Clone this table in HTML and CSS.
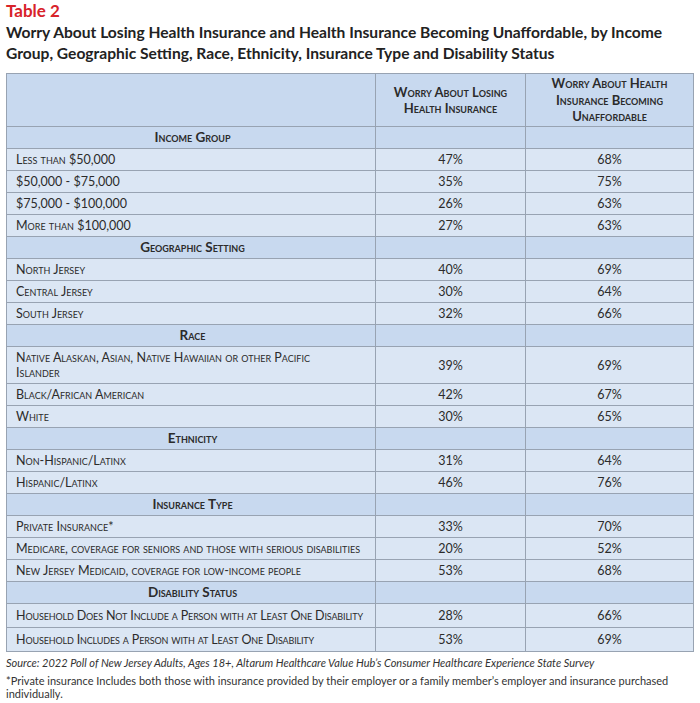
FILE: index.html
```html
<!DOCTYPE html>
<html lang="en">
<head>
<meta charset="UTF-8">
<meta name="viewport" content="width=device-width,initial-scale=1.0">
<title>Table 2</title>
<link rel="stylesheet" href="styles.css">
</head>
<body>

<!-- ====== Title ====== -->
<div class="tbl-label">Table 2</div>
<h1 class="tbl-title">Worry About Losing Health Insurance and Health Insurance Becoming Unaffordable, by Income Group, Geographic Setting, Race, Ethnicity, Insurance Type and Disability Status</h1>

<!-- ====== Table ====== -->
<table class="data">
  <colgroup>
    <col class="c1"><col class="c2"><col class="c3">
  </colgroup>
  <thead>
    <tr>
      <th></th>
      <th>Worry About Losing<br>Health Insurance</th>
      <th>Worry About Health<br>Insurance Becoming<br>Unaffordable</th>
    </tr>
  </thead>
  <tbody>
    <tr class="sec"><td>Income Group</td><td></td><td></td></tr>
    <tr><td>Less than $50,000</td><td>47%</td><td>68%</td></tr>
    <tr><td>$50,000 - $75,000</td><td>35%</td><td>75%</td></tr>
    <tr><td>$75,000 - $100,000</td><td>26%</td><td>63%</td></tr>
    <tr><td>More than $100,000</td><td>27%</td><td>63%</td></tr>

    <tr class="sec"><td>Geographic Setting</td><td></td><td></td></tr>
    <tr><td>North Jersey</td><td>40%</td><td>69%</td></tr>
    <tr><td>Central Jersey</td><td>30%</td><td>64%</td></tr>
    <tr><td>South Jersey</td><td>32%</td><td>66%</td></tr>

    <tr class="sec"><td>Race</td><td></td><td></td></tr>
    <tr><td>Native Alaskan, Asian, Native Hawaiian or other Pacific<br>Islander</td><td>39%</td><td>69%</td></tr>
    <tr><td>Black/African American</td><td>42%</td><td>67%</td></tr>
    <tr><td>White</td><td>30%</td><td>65%</td></tr>

    <tr class="sec"><td>Ethnicity</td><td></td><td></td></tr>
    <tr><td>Non-Hispanic/Latinx</td><td>31%</td><td>64%</td></tr>
    <tr><td>Hispanic/Latinx</td><td>46%</td><td>76%</td></tr>

    <tr class="sec"><td>Insurance Type</td><td></td><td></td></tr>
    <tr><td>Private Insurance*</td><td>33%</td><td>70%</td></tr>
    <tr><td>Medicare, coverage for seniors and those with serious disabilities</td><td>20%</td><td>52%</td></tr>
    <tr><td>New Jersey Medicaid, coverage for low-income people</td><td>53%</td><td>68%</td></tr>

    <tr class="sec"><td>Disability Status</td><td></td><td></td></tr>
    <tr class="tall"><td>Household Does Not Include a Person with at Least One Disability</td><td>28%</td><td>66%</td></tr>
    <tr class="tall"><td>Household Includes a Person with at Least One Disability</td><td>53%</td><td>69%</td></tr>
  </tbody>
</table>

<!-- ====== Notes ====== -->
<p class="source">Source: 2022 Poll of New Jersey Adults, Ages 18+, Altarum Healthcare Value Hub’s Consumer Healthcare Experience State Survey</p>
<p class="note">*Private insurance Includes both those with insurance provided by their employer or a family member’s employer and insurance purchased individually.</p>

</body>
</html>
```

FILE: styles.css
```css
:root{
  --red      : #d8232a;
  --text     : #2b2b2b;
  --head     : #c8d9ef;
  --row      : #dbe6f4;
  --line     : #98a3b2;
}
*{box-sizing:border-box;}
html,body{margin:0;background:#fff;color:var(--text);font-family:Lato,"Open Sans",sans-serif;}
body{padding:0 6px;}

.tbl-label{color:var(--red);font-weight:700;font-size:17px;line-height:20px;padding-top:1px;}
.tbl-title{
  margin:1px 0 0;font-size:15.6px;line-height:21px;font-weight:700;color:#222;
  padding-right:30px;
}

.data{
  margin-top:9px;width:687px;border-collapse:collapse;table-layout:fixed;
  border:1px solid var(--line);
}
.c1{width:369px;}
.c2{width:150px;}
.c3{width:168px;}

.data th,.data td{border:1px solid var(--line);}
.data th{
  background:var(--head);font-weight:700;font-size:13px;line-height:16.5px;
  font-variant:small-caps;padding:1px 4px;height:53px;
}
.data td{
  background:var(--row);font-size:12.5px;line-height:15px;padding:3px 6px 3px 9px;
  font-variant:small-caps;height:22px;white-space:nowrap;
}
.data td+td{text-align:center;font-variant:normal;padding:3px 4px;}
.data tr.sec td{background:var(--head);font-weight:700;font-size:13.5px;text-align:center;height:22px;}
.data tr.tall td{height:24px;}
.data tr.tall td:first-child{letter-spacing:-0.15px;}

.source,.note{margin:0;font-size:11px;line-height:13px;color:#333;}
.source{font-style:italic;margin-top:4px;}
.note{margin-top:5px;}
```
